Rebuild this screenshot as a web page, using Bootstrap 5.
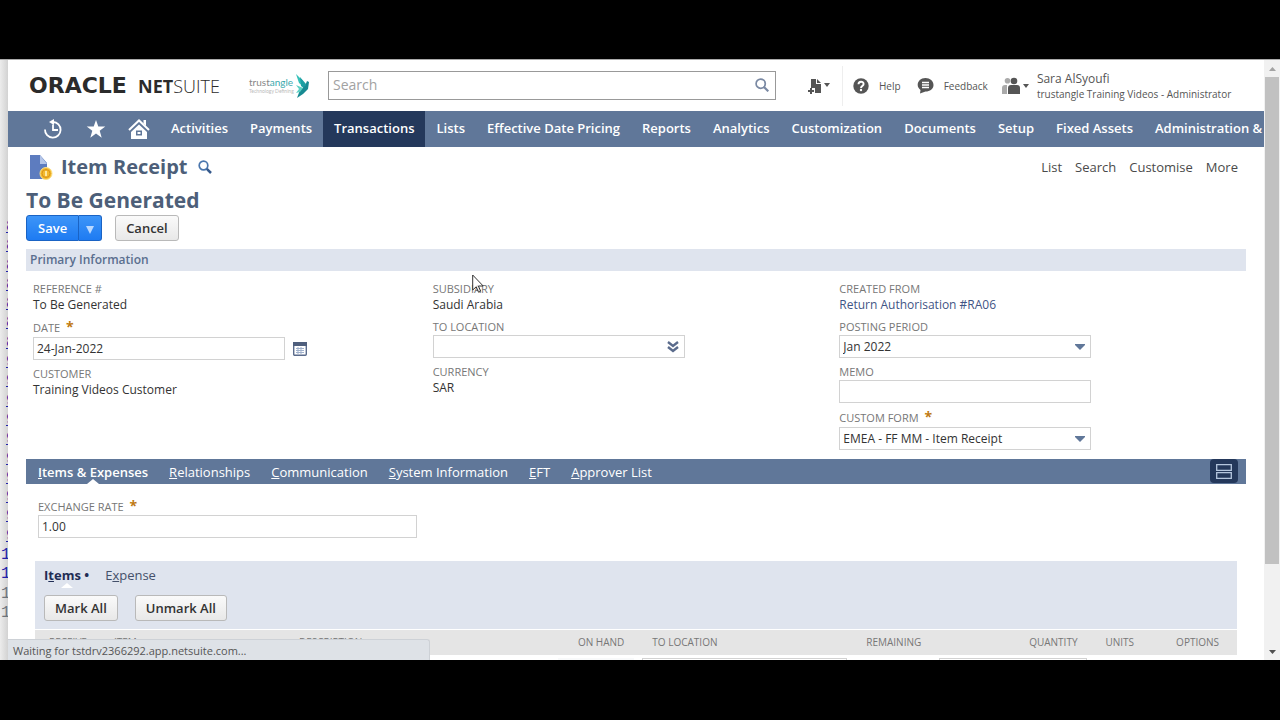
<!DOCTYPE html>
<html lang="en">
<head>
<meta charset="utf-8">
<meta name="viewport" content="width=device-width, initial-scale=1">
<title>Item Receipt - NetSuite</title>
<link href="https://cdn.jsdelivr.net/npm/bootstrap@5.3.0/dist/css/bootstrap.min.css" rel="stylesheet">
<style>
:root{--ns-blue:#607799;--ns-navy:#24385b;--ns-pale:#dfe4ee}
body{background:#000;font-family:"Open Sans","Liberation Sans",sans-serif;font-size:13px;line-height:16px;color:#333;padding:59px 0 60px}
a{text-decoration:none;color:inherit}
button{font-family:inherit}
.frame-row{border-top:1px solid #aaa;min-height:0}
.behind{width:8px;background:linear-gradient(90deg,#ececec,#d2d2d2);padding:158px 0 37px;font:16px/19px "Liberation Mono",monospace;color:#22a}
.behind a{text-decoration:underline;padding-left:6px}
.behind .hundred{padding-left:1px;text-decoration:none}
.page{min-width:0;background:#fff}
.top-bar{height:51px;padding-left:21px}
.oracle-word{width:109px;font:bold 22px/20px "DejaVu Sans",sans-serif;color:#2b2b2b}
.ns-word{width:111px;font-size:18px;line-height:20px;color:#2b2b2b}
.ns-word b{font-weight:700}.ns-word span{font-weight:300}
.partner{width:79px}
.partner-name{font:10px/11px Lato,sans-serif;color:#888}
.partner-name span{color:#3aa9ad}
.partner-tag{font:5px/6px Lato,sans-serif;color:#bbb}
.find{width:448px;height:29px;border:1px solid #999;padding:0 6px 0 4px;margin-bottom:1px}
.find input{font-size:14px;color:#333;outline:0;min-width:0}
.find input::placeholder{color:#a2a2a2}
.tools{font-size:11px;color:#555}
.tools .new-btn{width:50px;border-right:1px solid #eee;height:40px;padding-left:14px;margin-left:17px}
.help-link{margin-left:10px}
.feedback-link{margin-left:16px}
.role-link{margin-left:14px}
.tool-word{font-size:10px;margin-left:10px}
.user-name{font-size:12px;line-height:16px}
.user-role{font-size:10px;line-height:14px}
.main-nav{height:36px;background:var(--ns-blue);color:#fff;font-weight:600;padding-left:23px}
.main-nav a{padding:0 11px;line-height:34px;height:36px;white-space:nowrap}
.main-nav a.icon-item{width:43px;padding:0;display:flex;align-items:center;justify-content:center}
.main-nav a.current{background:var(--ns-navy)}
.content{padding:0 18px}
.title-row{height:39px;padding:0 8px 0 4px}
h1,h2{color:#4d5f79;font-weight:700;margin:0}
h1{font-size:20px;line-height:24px}
h2{font-size:21px;line-height:28px}
.title-links{gap:13px;color:#4a4a4a;font-size:13px}
.actions{gap:13px;margin-top:1px}
.ns-btn{height:26px;border:1px solid #b9b9b9;border-radius:3px;background:linear-gradient(#fafafa,#e8e8e8);font-size:13px;font-weight:600;color:#333;padding:0 10px;line-height:22px}
.ns-primary{background:linear-gradient(#3d95f8,#1e7bf2);border-color:#1a63c4;color:#fff;padding:0 11px}
.save-arrow{padding:0 6px;line-height:18px}
.section-head{background:var(--ns-pale);color:#5a6f8f;font-size:12px;font-weight:600;line-height:22px;padding:0 4px;margin:8px 0 0}
.fields{padding-top:10px}
.first-col{padding-left:7px}
.field{margin-bottom:6px}
.field label,.field .cap{display:block;font-size:11px;line-height:16px;color:#777}
.field .needed{line-height:18px}
.star{color:#c07a12;font-weight:700;font-size:14px;margin-left:3px;line-height:10px}
.val{font-size:12px;line-height:16px}
.val a{color:#3f5585}
.ns-input{display:block;width:62%;height:23px;border:1px solid #d2d2d2;border-radius:0;background-color:#fff;font-size:12px;color:#333;padding:0 3px}
.first-col .ns-input{width:63%}
select.ns-input{appearance:none;background:#fff url("data:image/svg+xml,%3Csvg xmlns='http://www.w3.org/2000/svg' viewBox='0 0 12 8'%3E%3Cpath fill='%23607799' d='M1 1h10v1L6 7 1 2z'/%3E%3C/svg%3E") no-repeat right 4px center/12px 8px}
select.loc{background-image:url("data:image/svg+xml,%3Csvg xmlns='http://www.w3.org/2000/svg' viewBox='0 0 12 12'%3E%3Cpath fill='none' stroke='%235a6b8c' stroke-width='2.4' d='M1 1l5 4 5-4M1 6l5 4 5-4'/%3E%3C/svg%3E");background-size:12px 12px;background-position:right 5px center}
.tab-bar{height:25px;background:var(--ns-blue);color:#fff;padding:0 8px 0 12px;gap:21px;line-height:27px;margin-top:3px}
.tab-bar .chosen,.sub-tabs .chosen{font-weight:600;position:relative}
.tab-bar .chosen::after,.sub-tabs .chosen::after{content:"";position:absolute;left:50%;bottom:0;border:6px solid transparent;border-top:0;border-bottom:5px solid #fff;margin-left:-6px}
.sub-tabs .chosen::after{bottom:-3px}
.layout-btn{width:28px;height:24px;background:var(--ns-navy);border-radius:4px}
.rate{padding:15px 0 0 12px}
.rate .field{margin:0;width:379px}
.rate .ns-input{width:100%}
.sublist{background:var(--ns-pale);margin:23px 9px 0}
.sub-tabs{padding:4px 9px 0;gap:16px;line-height:20px;color:#44506a}
.sub-tabs .chosen{color:#1f2d55;font-weight:700}
.sub-actions{padding:10px 9px 8px;gap:17px}
.sublist table{table-layout:fixed;font-size:10px;color:#777;border-top:1px solid #fff}
.sublist th{font-weight:400;background:#e5e5e5;height:25px;padding:0 14px;white-space:nowrap}
.sublist th:last-child{padding-right:18px}
.sublist td{background:#fff;padding:3px 4px;height:30px}
.sublist td .ns-input{width:100%}
.status-note{left:8px;bottom:0;width:33%;height:21px;background:#dee2e7;border:1px solid #cdd1d6;border-left:0;border-bottom:0;border-radius:0 3px 0 0;font-size:11px;line-height:21px;padding-left:5px;color:#555}
.pointer{left:472px;top:214px}
.scroller{width:16px;background:#f1f1f1}
.scroller .cap-end{height:17px}
.scroller .thumb{background:#c1c1c1;height:86%;margin-right:1px;margin-left:1px}
</style>
</head>
<body class="vh-100 d-flex flex-column overflow-hidden">
<div class="frame-row d-flex flex-fill position-relative overflow-hidden">
  <div class="behind d-flex flex-column justify-content-between flex-shrink-0 overflow-hidden" aria-hidden="true">
    <a href="#">8</a><a href="#">8</a><a href="#">8</a><a href="#">8</a><a href="#">8</a><a href="#">8</a><a href="#">8</a>
    <a href="#">9</a><a href="#">9</a><a href="#">9</a><a href="#">9</a><a href="#">9</a><a href="#">9</a><a href="#">9</a><a href="#">9</a><a href="#">9</a><a href="#">9</a>
    <a class="hundred" href="#">1</a><a class="hundred" href="#">1</a><a class="hundred text-secondary" href="#">1</a><a class="hundred text-secondary" href="#">1</a>
  </div>

  <div class="page flex-fill overflow-hidden">
    <header class="top-bar d-flex align-items-center">
      <div class="oracle-word flex-shrink-0">ORACLE</div>
      <div class="ns-word flex-shrink-0"><b>NET</b><span>SUITE</span></div>
      <div class="partner d-flex align-items-center flex-shrink-0">
        <div><div class="partner-name">trust<span>angle</span></div><div class="partner-tag">Technology Defining</div></div>
        <svg width="18" height="26" viewBox="0 0 18 26"><path fill="#35c0b8" d="M2 1l7 7 1 6-5-4z"/><path fill="#1b9fa3" d="M6 4l6 7-1 5-4-3z"/><path fill="#178a92" d="M13 8l2 1-1 7-5 5-6 4 3-8 5-4z"/><path fill="#5cd0c4" d="M2 12l7 3-3 4-4 1 3-4z"/></svg>
      </div>
      <div class="find d-flex align-items-center flex-shrink-0">
        <input class="border-0 flex-fill p-0" type="text" placeholder="Search" aria-label="Search">
        <svg width="14" height="14" viewBox="0 0 14 14" fill="none" stroke="#7a89a3" stroke-width="1.7"><circle cx="5.7" cy="5.7" r="4.6"/><path stroke-width="2.2" d="M9 9l4.300 4.300"/></svg>
      </div>
      <div class="tools d-flex align-items-center flex-shrink-0">
        <a class="new-btn d-flex align-items-center" href="#" aria-label="Create new"><svg width="23" height="18" viewBox="0 0 23 18" fill="#555"><path d="M4 2h5v5h5v9H8v-5H4z"/><path d="M10 2l4 4h-4zM3 11h2v2h2v2H5v2H3v-2H1v-2h2zM17 6h6l-3 4z"/></svg></a>
        <a class="help-link d-flex align-items-center" href="#"><svg width="16" height="16" viewBox="0 0 16 16"><circle cx="8" cy="8" r="7.700" fill="#555"/><path d="M5.500 6.200C5.500 3 10.600 3 10.600 6c0 2-2.600 2-2.600 4" fill="none" stroke="#fff" stroke-width="1.900"/><circle cx="8" cy="12" r="1.200" fill="#fff"/></svg><span class="tool-word">Help</span></a>
        <a class="feedback-link d-flex align-items-center" href="#"><svg width="17" height="17" viewBox="0 0 17 17"><path fill="#555" d="M8.500 1C13 1 16.500 4 16.500 8S13 14.500 8.500 14.500L3 16.500 3.500 13C-2 9 1 1 8.500 1z"/><path stroke="#fff" stroke-width="1.300" d="M5 5.500h7M5 8h7M5 10.500h7"/></svg><span class="tool-word">Feedback</span></a>
        <a class="role-link d-flex align-items-center" href="#"><svg width="27" height="18" viewBox="0 0 27 18"><g fill="#aaa"><circle cx="5.500" cy="3.800" r="2.800"/><path d="M0 17v-6q0-3 3-3h2v9z"/></g><g fill="#555"><circle cx="12" cy="4" r="3.300"/><path d="M6 17v-6q0-3 3-3h6q3 0 3 3v6zM21 7h6l-3 4z"/></g></svg><span class="ms-2"><span class="user-name d-block">Sara AlSyoufi</span><span class="user-role d-block">trustangle Training Videos - Administrator</span></span></a>
      </div>
    </header>

    <nav class="main-nav d-flex flex-nowrap overflow-hidden">
      <a class="icon-item flex-shrink-0" href="#" aria-label="Recent"><svg width="20" height="20" viewBox="0 0 20 20" fill="none" stroke="#fff" stroke-width="1.800"><path d="M10 3a7.800 7.800 0 1 1-8 7.500"/><path d="M10 5.500V11h5"/><path fill="#fff" stroke="none" d="M6 3l5-3v6z"/></svg></a>
      <a class="icon-item flex-shrink-0" href="#" aria-label="Shortcuts"><svg width="20" height="20" viewBox="0 0 20 20"><path fill="#fff" d="M10 1l2.300 6.600h7l-5.600 4.200 2 6.900L10 14.600l-5.700 4.100 2-6.900L.700 7.600h7z"/></svg></a>
      <a class="icon-item flex-shrink-0" href="#" aria-label="Home"><svg width="22" height="20" viewBox="0 0 22 20"><path fill="none" stroke="#fff" stroke-width="2" d="M1 11L11 1.500 21 11"/><path fill="#fff" d="M15.500 1H18v6l-2.500-2.500z"/><path fill="#fff" fill-rule="evenodd" d="M11 5.500l8 7.500v7H3v-7zM8 11.500v5h6v-5z"/><path fill="#fff" d="M9.500 13h3v2h-3z"/></svg></a>
      <a href="#">Activities</a><a href="#">Payments</a><a class="current" href="#">Transactions</a><a href="#">Lists</a><a href="#">Effective Date Pricing</a><a href="#">Reports</a><a href="#">Analytics</a><a href="#">Customization</a><a href="#">Documents</a><a href="#">Setup</a><a href="#">Fixed Assets</a><a href="#">Administration &amp;</a>
    </nav>

    <main class="content">
      <div class="title-row d-flex align-items-center">
        <svg width="23" height="26" viewBox="0 0 23 26"><path fill="#5d7cbf" d="M0 1h10l7 8v16H0z"/><path fill="#b4c5e8" d="M10 1l7 9h-7z"/><circle cx="16" cy="19.500" r="6" fill="#f3b92c" stroke="#fbe08a"/><circle cx="16" cy="19.500" r="4" fill="none" stroke="#d9921a"/><path stroke="#fff3c0" stroke-width="1.600" d="M16 17v5"/></svg>
        <h1 class="ms-2">Item Receipt</h1>
        <a class="ms-2 d-flex" href="#" aria-label="Quick search"><svg width="16" height="14" viewBox="-2 0 16 14" fill="none" stroke="#4a76ad" stroke-width="1.700"><circle cx="5.500" cy="5.500" r="4.300"/><path stroke="#35598c" stroke-width="2.500" d="M8.800 8.800l4.200 4.200"/></svg></a>
        <div class="title-links d-flex ms-auto"><a href="#">List</a><a href="#">Search</a><a href="#">Customise</a><a href="#">More</a></div>
      </div>
      <h2>To Be Generated</h2>
      <div class="actions d-flex">
        <div class="d-flex"><button type="button" class="ns-btn ns-primary rounded-end-0">Save</button><button type="button" class="ns-btn ns-primary rounded-start-0 border-start-0 save-arrow" aria-label="More save options"><svg width="10" height="9" viewBox="0 0 10 9"><path fill="#b9d8ff" d="M1 1h8L5 9z"/></svg></button></div>
        <button type="button" class="ns-btn">Cancel</button>
      </div>
      <h3 class="section-head">Primary Information</h3>

      <div class="fields row g-0">
        <div class="col-4 first-col">
          <div class="field"><span class="cap">REFERENCE #</span><div class="val">To Be Generated</div></div>
          <div class="field"><label class="needed" for="date">DATE <span class="star">*</span></label>
            <div class="d-flex align-items-center"><input id="date" class="ns-input flex-shrink-0" value="24-Jan-2022"><svg class="ms-2" width="14" height="14" viewBox="0 0 14 14"><rect x=".7" y=".7" width="12.600" height="12.600" rx="1" fill="#fff" stroke="#5a6b8c" stroke-width="1.400"/><path fill="#4f5f7d" d="M0 0h14v4H0z"/><path stroke="#9fb0cb" d="M3 6.500h8M3 8.500h8M3 10.500h8M5 5v7M8 5v7"/></svg></div></div>
          <div class="field"><span class="cap">CUSTOMER</span><div class="val">Training Videos Customer</div></div>
        </div>
        <div class="col-4">
          <div class="field"><span class="cap">SUBSIDIARY</span><div class="val">Saudi Arabia</div></div>
          <div class="field"><label for="loc">TO LOCATION</label><select id="loc" class="ns-input loc"><option></option></select></div>
          <div class="field"><span class="cap">CURRENCY</span><div class="val">SAR</div></div>
        </div>
        <div class="col-4">
          <div class="field"><span class="cap">CREATED FROM</span><div class="val"><a href="#">Return Authorisation #RA06</a></div></div>
          <div class="field"><label for="period">POSTING PERIOD</label><select id="period" class="ns-input"><option>Jan 2022</option></select></div>
          <div class="field"><label for="memo">MEMO</label><input id="memo" class="ns-input"></div>
          <div class="field"><label class="needed" for="form">CUSTOM FORM <span class="star">*</span></label><select id="form" class="ns-input"><option>EMEA - FF MM - Item Receipt</option></select></div>
        </div>
      </div>

      <div class="tab-bar d-flex">
        <a class="chosen" href="#"><u>I</u>tems &amp; Expenses</a><a href="#"><u>R</u>elationships</a><a href="#"><u>C</u>ommunication</a><a href="#"><u>S</u>ystem Information</a><a href="#"><u>E</u>FT</a><a href="#"><u>A</u>pprover List</a>
        <button type="button" class="layout-btn border-0 p-0 ms-auto d-flex align-items-center justify-content-center" aria-label="Change layout"><svg width="16" height="15" viewBox="0 0 16 15" fill="none" stroke="#b5c6de" stroke-width="1.300"><path d="M.7.700h14.600v5.600H.700zM.7 8.700h14.600v5.600H.700z"/></svg></button>
      </div>
      <div class="rate"><div class="field"><label for="rate">EXCHANGE RATE <span class="star">*</span></label><input id="rate" class="ns-input" value="1.00"></div></div>

      <section class="sublist">
        <div class="sub-tabs d-flex"><a class="chosen" href="#">I<u>t</u>ems •</a><a href="#">E<u>x</u>pense</a></div>
        <div class="sub-actions d-flex"><button type="button" class="ns-btn">Mark All</button><button type="button" class="ns-btn">Unmark All</button></div>
        <table class="w-100">
          <colgroup><col style="width:5.4%"><col style="width:15.4%"><col style="width:22.4%"><col style="width:7%"><col style="width:17.7%"><col style="width:7%"><col style="width:13%"><col style="width:4.4%"><col></colgroup>
          <thead><tr><th>RECEIVE</th><th>ITEM</th><th>DESCRIPTION</th><th class="text-end">ON HAND</th><th>TO LOCATION</th><th class="text-end">REMAINING</th><th class="text-end">QUANTITY</th><th>UNITS</th><th class="text-end">OPTIONS</th></tr></thead>
          <tbody><tr><td></td><td></td><td></td><td><input class="ns-input border-0 bg-light" aria-label="On hand" readonly></td><td><input class="ns-input" aria-label="To location"></td><td></td><td><input class="ns-input" aria-label="Quantity"></td><td></td><td></td></tr></tbody>
        </table>
      </section>
    </main>
  </div>

  <div class="scroller d-flex flex-column flex-shrink-0" aria-hidden="true">
    <div class="cap-end d-flex align-items-center justify-content-center flex-shrink-0"><svg width="7" height="4" viewBox="0 0 7 4"><path fill="#a3a3a3" d="M0 4l3.500-4L7 4z"/></svg></div>
    <div class="flex-fill"><div class="thumb"></div></div>
    <div class="cap-end d-flex align-items-center justify-content-center flex-shrink-0"><svg width="7" height="4" viewBox="0 0 7 4"><path fill="#505050" d="M0 0l3.500 4L7 0z"/></svg></div>
  </div>

  <div class="status-note position-absolute">Waiting for tstdrv2366292.app.netsuite.com...</div>
  <svg class="pointer position-absolute" width="13" height="20" viewBox="0 0 13 20"><path fill="#fff" fill-opacity=".7" stroke="#333" d="M.7 1v15l3.500-3.200 2.300 5.400 2.200-1-2.300-5.200h4.800z"/></svg>
</div>
<script src="https://cdn.jsdelivr.net/npm/bootstrap@5.3.0/dist/js/bootstrap.bundle.min.js"></script>
</body>
</html>
